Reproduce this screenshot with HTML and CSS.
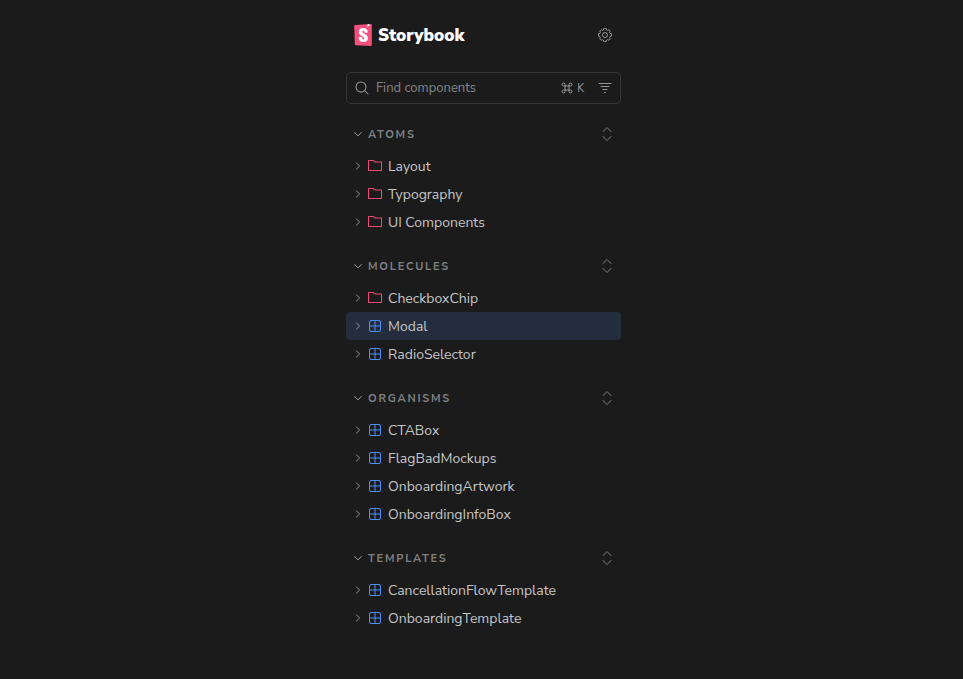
FILE: index.html
```html
<!DOCTYPE html>
<html lang="en">
<head>
<meta charset="utf-8">
<meta name="viewport" content="width=device-width, initial-scale=1">
<title>Storybook</title>
<link rel="stylesheet" href="styles.css">
</head>
<body>
<svg class="sprite" aria-hidden="true">
  <symbol id="right" viewBox="0 0 8 8"><path d="M2.4.8 5.6 4 2.4 7.2" fill="none" stroke="currentColor" stroke-linecap="round" stroke-linejoin="round"/></symbol>
  <symbol id="down" viewBox="0 0 8 8"><path d="M.5 2.400 4 5.800l3.500-3.400" fill="none" stroke="currentColor" stroke-linecap="round" stroke-linejoin="round"/></symbol>
  <symbol id="folder" viewBox="0 0 14 14"><path fill="currentColor" fill-rule="evenodd" d="M6.586 3.504l-1.500-1.500H1v9h12v-7.500H6.586zm.414-1L5.793 1.297a1 1 0 00-.707-.293H.5a.5.5 0 00-.5.5v10a.5.5 0 00.5.5h13a.5.5 0 00.5-.5v-8.500a.5.5 0 00-.5-.5H7z"/></symbol>
  <symbol id="component" viewBox="0 0 14 14"><path fill="currentColor" fill-rule="evenodd" d="M3.500 1.004a2.500 2.500 0 00-2.500 2.500v7a2.500 2.500 0 002.500 2.500h7a2.500 2.500 0 002.500-2.500v-7a2.500 2.500 0 00-2.500-2.500h-7zm8.500 5.500H7.500v-4.500h3a1.500 1.500 0 011.500 1.500v3zm0 1v3a1.500 1.500 0 01-1.500 1.500h-3v-4.500H12zm-5.500 4.500v-4.500H2v3a1.500 1.500 0 001.500 1.500h3zM2 6.504h4.500v-4.500h-3a1.500 1.500 0 00-1.500 1.500v3z"/></symbol>
  <symbol id="expand" viewBox="0 0 14 14"><path d="M3 4.500l4-4 4 4M3 9.500l4 4 4-4" fill="none" stroke="currentColor" stroke-linecap="round" stroke-linejoin="round"/></symbol>
</svg>
<div class="sidebar">
  <header class="header">
    <a class="brand" href="#">
      <svg class="logo" viewBox="0 0 24 24" aria-hidden="true"><path fill="#fff" d="M6 3h12v18H6z"/><path fill="#f4507b" d="M16.71.243l-.12 2.71a.18.18 0 00.29.15l1.06-.8.9.7a.18.18 0 00.28-.14l-.1-2.76 1.33-.1a1.2 1.2 0 011.279 1.2v21.596a1.2 1.2 0 01-1.26 1.2l-16.096-.72a1.2 1.2 0 01-1.15-1.16l-.75-19.797a1.2 1.2 0 011.13-1.27L16.7.222zM13.64 9.3c0 .47 3.16.24 3.59-.08 0-3.2-1.72-4.89-4.859-4.89-3.15 0-4.899 1.72-4.899 4.29 0 4.45 5.999 4.53 5.999 6.959 0 .7-.32 1.1-1.05 1.1-.96 0-1.35-.49-1.3-2.16 0-.36-3.649-.48-3.769 0-.27 4.03 2.23 5.2 5.099 5.2 2.79 0 4.969-1.49 4.969-4.18 0-4.77-6.099-4.64-6.099-6.999 0-.97.72-1.1 1.13-1.1.45 0 1.25.07 1.19 1.87z"/><path fill="#fff" d="M16.710.243l-.12 2.710a.18.18 0 00.29.15l1.060-.8.9.7a.18.18 0 00.28-.14l-.1-2.760z"/></svg>
      <span>Storybook</span>
    </a>
    <button class="tool" type="button" aria-label="Settings">
      <svg class="icon" viewBox="0 0 14 14" fill="none" stroke="currentColor" stroke-linejoin="round"><path d="M5.7.6h2.6l.4 1.4.9.4 1.3-.7 1.4 1.4-.7 1.3.4.9 1.4.4v2.6l-1.4.4-.4.9.7 1.3-1.4 1.4-1.3-.7-.9.4-.4 1.4H5.7L5.3 12l-.9-.4-1.3.7-1.4-1.4.7-1.3L2 8.700l-1.400-.4V5.700L2 5.300l.4-.9-.7-1.300 1.400-1.400 1.300.7.9-.4z"/><circle cx="7" cy="7" r="2.500"/></svg>
    </button>
  </header>

  <form class="search">
    <svg class="icon" viewBox="0 0 14 14" aria-hidden="true"><path fill="currentColor" fill-rule="evenodd" d="M9.544 10.206a5.500 5.500 0 11.662-.662.5.5 0 01.148.102l3 3a.5.5 0 01-.708.708l-3-3a.5.5 0 01-.102-.148zM10.500 6a4.500 4.500 0 11-9 0 4.500 4.500 0 019 0z"/></svg>
    <input class="field" type="text" placeholder="Find components" aria-label="Find components">
    <span class="keys">
      <svg class="command" viewBox="0 0 12 12" fill="none" stroke="currentColor" aria-hidden="true"><path d="M4 4V2.500A1.500 1.500 0 102.500 4h7A1.500 1.500 0 108 2.500v7A1.500 1.500 0 109.500 8h-7A1.500 1.500 0 104 9.500z"/></svg>
      <kbd>K</kbd>
    </span>
    <button class="tool" type="button" aria-label="Filter">
      <svg class="icon" viewBox="0 0 14 14" fill="none" stroke="currentColor" stroke-linecap="round"><path d="M1 2.500h12M3 5.500h8M5 8.500h4M6.500 11.500h1"/></svg>
    </button>
  </form>

  <nav class="tree" aria-label="Components">
    <section>
      <div class="heading">
        <button class="toggle" type="button"><svg class="caret"><use href="#down"/></svg>Atoms</button>
        <button class="tool" type="button" aria-label="Expand all"><svg class="icon"><use href="#expand"/></svg></button>
      </div>
      <a class="item" href="#"><svg class="caret"><use href="#right"/></svg><svg class="icon folder"><use href="#folder"/></svg>Layout</a>
      <a class="item" href="#"><svg class="caret"><use href="#right"/></svg><svg class="icon folder"><use href="#folder"/></svg>Typography</a>
      <a class="item" href="#"><svg class="caret"><use href="#right"/></svg><svg class="icon folder"><use href="#folder"/></svg>UI Components</a>
    </section>
    <section>
      <div class="heading">
        <button class="toggle" type="button"><svg class="caret"><use href="#down"/></svg>Molecules</button>
        <button class="tool" type="button" aria-label="Expand all"><svg class="icon"><use href="#expand"/></svg></button>
      </div>
      <a class="item" href="#"><svg class="caret"><use href="#right"/></svg><svg class="icon folder"><use href="#folder"/></svg>CheckboxChip</a>
      <a class="item current" href="#"><svg class="caret"><use href="#right"/></svg><svg class="icon component"><use href="#component"/></svg>Modal</a>
      <a class="item" href="#"><svg class="caret"><use href="#right"/></svg><svg class="icon component"><use href="#component"/></svg>RadioSelector</a>
    </section>
    <section>
      <div class="heading">
        <button class="toggle" type="button"><svg class="caret"><use href="#down"/></svg>Organisms</button>
        <button class="tool" type="button" aria-label="Expand all"><svg class="icon"><use href="#expand"/></svg></button>
      </div>
      <a class="item" href="#"><svg class="caret"><use href="#right"/></svg><svg class="icon component"><use href="#component"/></svg>CTABox</a>
      <a class="item" href="#"><svg class="caret"><use href="#right"/></svg><svg class="icon component"><use href="#component"/></svg>FlagBadMockups</a>
      <a class="item" href="#"><svg class="caret"><use href="#right"/></svg><svg class="icon component"><use href="#component"/></svg>OnboardingArtwork</a>
      <a class="item" href="#"><svg class="caret"><use href="#right"/></svg><svg class="icon component"><use href="#component"/></svg>OnboardingInfoBox</a>
    </section>
    <section>
      <div class="heading">
        <button class="toggle" type="button"><svg class="caret"><use href="#down"/></svg>Templates</button>
        <button class="tool" type="button" aria-label="Expand all"><svg class="icon"><use href="#expand"/></svg></button>
      </div>
      <a class="item" href="#"><svg class="caret"><use href="#right"/></svg><svg class="icon component"><use href="#component"/></svg>CancellationFlowTemplate</a>
      <a class="item" href="#"><svg class="caret"><use href="#right"/></svg><svg class="icon component"><use href="#component"/></svg>OnboardingTemplate</a>
    </section>
  </nav>
</div>
</body>
</html>
```
FILE: styles.css
```css
* {
  box-sizing: border-box;
}

body {
  margin: 0;
  padding: 20px 0 20px 4px;
  background: #1b1b1b;
  color: #c4c5c7;
  font-family: "Nunito Sans", "Open Sans", "Noto Sans", sans-serif;
  font-size: 14px;
  line-height: 19px;
}

.sprite {
  display: none;
}

a {
  color: inherit;
  text-decoration: none;
}

button,
input,
kbd {
  margin: 0;
  padding: 0;
  border: 0;
  background: none;
  color: inherit;
  font: inherit;
}

.sidebar {
  max-width: 275px;
  margin: 0 auto;
}

.header {
  display: flex;
  align-items: center;
  justify-content: space-between;
  height: 30px;
  margin-bottom: 22px;
  padding: 0 2px 0 6px;
}

.brand {
  display: flex;
  align-items: center;
  gap: 4px;
  color: #fff;
  font-size: 17px;
  font-weight: 900;
}

.logo {
  width: 22px;
  height: 22px;
}

.tool {
  display: flex;
  align-items: center;
  justify-content: center;
  width: 28px;
  height: 28px;
  color: #96979a;
}

.icon {
  flex: none;
  width: 14px;
  height: 14px;
}

.search {
  display: flex;
  align-items: center;
  height: 32px;
  padding: 0 1px 0 8px;
  border: 1px solid #343536;
  border-radius: 5px;
  color: #96979a;
}

.field {
  flex: 1;
  min-width: 0;
  padding-left: 7px;
  outline: 0;
  font-size: 13px;
}

.field::placeholder {
  color: #858689;
  opacity: 1;
}

.keys {
  display: flex;
  align-items: center;
  gap: 4px;
  padding-right: 7px;
  font-size: 11px;
}

.command {
  width: 12px;
  height: 12px;
}

.tree {
  display: grid;
  gap: 16px;
  padding-top: 16px;
}

.heading {
  display: flex;
  align-items: center;
  justify-content: space-between;
  height: 28px;
  margin-bottom: 4px;
}

.heading .tool {
  color: #7d7e81;
}

.toggle {
  display: flex;
  align-items: center;
  gap: 6px;
  padding-left: 8px;
  color: #808184;
  font-size: 11px;
  font-weight: 700;
  letter-spacing: 0.16em;
  text-transform: uppercase;
}

.caret {
  flex: none;
  width: 8px;
  height: 8px;
  color: #96979a;
}

.item {
  display: flex;
  align-items: center;
  gap: 6px;
  height: 28px;
  padding-left: 8px;
  border-radius: 4px;
}

.current {
  background: #232d3e;
}

.folder {
  color: #f14a75;
}

.component {
  color: #4d8ff7;
}
```
